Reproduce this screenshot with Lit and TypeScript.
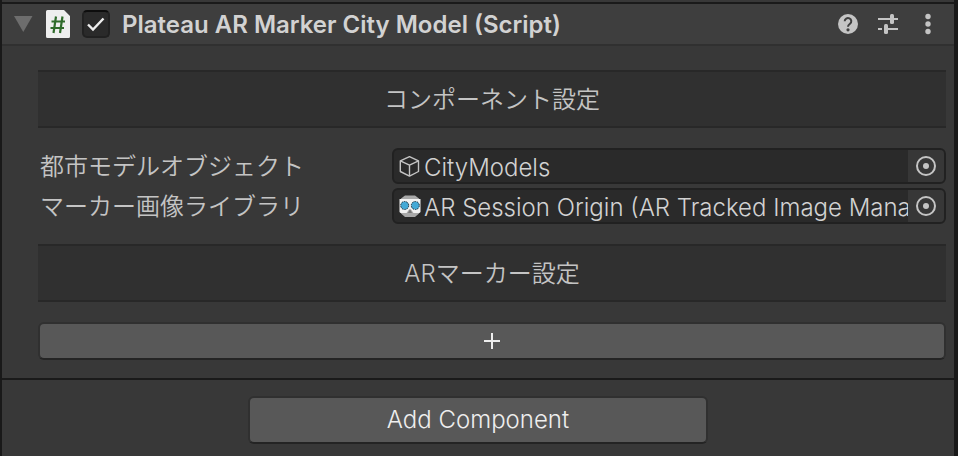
import { LitElement, html, svg, css } from "lit";
import { customElement, property, state } from "lit/decorators.js";

const cubeIcon = svg`
  <svg viewBox="0 0 22 22" width="22" height="22" fill="none" stroke="#c4c4c4" stroke-width="1.4" stroke-linejoin="round" aria-hidden="true">
    <path d="M10.500 1.700 19.500 5.800V16.500L10.500 21.100 1.300 16.500V5.800Z"/>
    <path d="M1.300 5.800 10.500 10.100 19.500 5.800M10.500 10.100V21.100"/>
  </svg>`;

const originIcon = svg`
  <svg viewBox="0 0 22 22" width="22" height="22" aria-hidden="true">
    <path d="M6 0.500h10l4 3v15l-4 3.500H6l-4-3.500v-15Z" fill="#a9a9a9"/>
    <path d="M0.500 4h21v13l-1 1h-6L12 14.500h-2L7.500 18h-6l-1-1Z" fill="#f2f2f2"/>
    <path d="M9 18 11 14l2 4Z" fill="#777"/>
    <circle cx="5.700" cy="10.500" r="4" fill="#43a9d6" stroke="#1d2b33" stroke-width="1" stroke-dasharray="1.500 1"/>
    <circle cx="16.300" cy="10.500" r="4" fill="#43a9d6" stroke="#1d2b33" stroke-width="1" stroke-dasharray="1.500 1"/>
  </svg>`;

@customElement("object-field")
export class ObjectField extends LitElement {
  @property() label = "";
  @property() value = "";
  @property() icon: "cube" | "origin" = "cube";

  static styles = css`
    :host {
      display: grid;
      grid-template-columns: 352px minmax(0, 1fr);
      align-items: center;
      height: 36px;
    }
    .label {
      padding: 2px 0 0 2px;
      color: #c4c4c4;
      white-space: nowrap;
    }
    .field {
      display: flex;
      align-items: center;
      box-sizing: border-box;
      height: 36px;
      margin-left: 2px;
      padding-left: 5px;
      border: 2px solid #212121;
      border-radius: 6px;
      background: #2a2a2a;
      overflow: hidden;
    }
    .field svg {
      flex: none;
    }
    .value {
      flex: 1;
      min-width: 0;
      height: 32px;
      margin: 0;
      padding: 3px 0 0 3px;
      box-sizing: border-box;
      border: 0;
      outline: 0;
      background: none;
      color: #d2d2d2;
      font: inherit;
    }
    .pick {
      display: grid;
      place-items: center;
      flex: none;
      width: 36px;
      height: 32px;
      padding: 0;
      border: 0;
      background: #373737;
    }
  `;

  render() {
    return html`
      <label class="label" for="value">${this.label}</label>
      <div class="field">
        ${this.icon === "cube" ? cubeIcon : originIcon}
        <input class="value" id="value" type="text" readonly .value=${this.value} />
        <button class="pick" type="button" aria-label="Select object">
          <svg viewBox="0 0 22 22" width="22" height="22" aria-hidden="true">
            <circle cx="11" cy="11" r="9" fill="none" stroke="#c4c4c4" stroke-width="2" />
            <circle cx="11" cy="11" r="3" fill="#c4c4c4" />
          </svg>
        </button>
      </div>
    `;
  }
}

@customElement("app-root")
export class AppRoot extends LitElement {
  @state() private active = true;

  static styles = css`
    :host {
      display: block;
      box-sizing: border-box;
      min-height: 100vh;
      border-left: 2px solid #191919;
      border-right: 4px solid #191919;
      background: #383838;
      color: #c4c4c4;
      font: 350 24px/32px Inter, "Noto Sans CJK JP", sans-serif;
    }
    .header {
      display: flex;
      align-items: center;
      box-sizing: border-box;
      height: 44px;
      margin-top: 2px;
      padding: 0 14px 0 12px;
      border-top: 2px solid #1a1a1a;
      border-bottom: 2px solid #303030;
      background: #3e3e3e;
    }
    .page {
      display: flow-root;
    }
    .icon-button {
      display: grid;
      place-items: center;
      flex: none;
      width: 24px;
      height: 24px;
      padding: 0;
      border: 0;
      background: none;
    }
    .fold {
      width: 20px;
    }
    .script {
      flex: none;
      margin: 0 12px;
    }
    .toggle {
      display: grid;
      flex: none;
      margin-right: 12px;
    }
    .toggle > * {
      grid-area: 1 / 1;
    }
    .check {
      appearance: none;
      box-sizing: border-box;
      width: 28px;
      height: 28px;
      margin: 0;
      border: 2px solid #212121;
      border-top-color: #0d0d0d;
      border-radius: 5px;
      background: #2a2a2a;
    }
    .tick {
      pointer-events: none;
    }
    .title {
      flex: 1;
      min-width: 0;
      margin: 0;
      padding-top: 2px;
      overflow: hidden;
      color: #d2d2d2;
      font-size: 24px;
      font-weight: 600;
      white-space: nowrap;
    }
    .tools {
      display: flex;
      gap: 16px;
    }
    .body {
      display: flex;
      flex-direction: column;
      gap: 20px;
      padding: 24px 8px 18px 36px;
      border-bottom: 2px solid #1a1a1a;
    }
    .band {
      box-sizing: border-box;
      margin: 0;
      padding: 12px 0 10px;
      border: solid #282828;
      border-width: 2px 0;
      background: #303030;
      font-size: 24px;
      font-weight: inherit;
      text-align: center;
    }
    .fields {
      display: grid;
      gap: 4px;
    }
    .button {
      display: grid;
      place-items: center;
      box-sizing: border-box;
      padding: 0;
      border: 2px solid #303030;
      border-bottom-color: #242424;
      border-radius: 6px;
      background: #585858;
      color: #eeeeee;
      font: inherit;
    }
    .add-marker {
      width: 100%;
      height: 38px;
    }
    .footer {
      display: flex;
      justify-content: center;
      padding: 16px 0 12px;
    }
    .add-component {
      width: 460px;
      height: 48px;
    }
  `;

  private onToggle(e: Event) {
    this.active = (e.target as HTMLInputElement).checked;
  }

  render() {
    return html`
      <div class="page">
        <header class="header">
          <button class="icon-button fold" type="button" aria-label="Collapse" aria-expanded="true">
            <svg viewBox="0 0 20 18" width="20" height="18" aria-hidden="true">
              <path d="M0 1h18.500L9.250 17Z" fill="#6d6d6d" />
            </svg>
          </button>
          <svg class="script" viewBox="0 0 24 28" width="24" height="28" aria-hidden="true">
            <path d="M1.500 0H18l6 6v20.500a1.500 1.500 0 0 1-1.500 1.500h-21A1.500 1.500 0 0 1 0 26.500v-25A1.500 1.500 0 0 1 1.500 0Z" fill="#eeeeee" />
            <path d="M10 6.500 7.500 23M16.500 6.500 14 23M5.500 11.500H19M4.500 18H18" fill="none" stroke="#2f6b2b" stroke-width="2.200" />
          </svg>
          <div class="toggle">
            <input class="check" type="checkbox" aria-label="Enabled" .checked=${this.active} @change=${this.onToggle} />
            ${this.active
              ? html`<svg class="tick" viewBox="0 0 28 28" width="28" height="28" aria-hidden="true">
                  <path d="M6 14.500 11 19.500 21.500 8.500" fill="none" stroke="#eeeeee" stroke-width="2.400" />
                </svg>`
              : null}
          </div>
          <h1 class="title">Plateau AR Marker City Model (Script)</h1>
          <div class="tools">
            <button class="icon-button" type="button" aria-label="Help">
              <svg viewBox="0 0 24 24" width="24" height="24" aria-hidden="true">
                <circle cx="12" cy="12" r="10" fill="#c4c4c4" />
                <path d="M8.700 9.300a3.300 3.200 0 1 1 5.300 2.500c-1.300 1-2 1.400-2 3" fill="none" stroke="#3e3e3e" stroke-width="2" />
                <circle cx="12" cy="17.800" r="1.600" fill="#3e3e3e" />
              </svg>
            </button>
            <button class="icon-button" type="button" aria-label="Presets">
              <svg viewBox="0 0 24 24" width="24" height="24" aria-hidden="true">
                <path d="M2 7H14M18 7H22M2 17H6M10 17H22" stroke="#c4c4c4" stroke-width="2" />
                <rect x="14" y="2" width="4" height="10" rx="1.500" fill="#c4c4c4" />
                <rect x="8" y="12" width="4" height="10" rx="1.500" fill="#c4c4c4" />
              </svg>
            </button>
            <button class="icon-button" type="button" aria-label="More">
              <svg viewBox="0 0 24 24" width="24" height="24" aria-hidden="true">
                <g fill="#c4c4c4">
                  <circle cx="12" cy="4.500" r="2.700" />
                  <circle cx="12" cy="12" r="2.700" />
                  <circle cx="12" cy="19.500" r="2.700" />
                </g>
              </svg>
            </button>
          </div>
        </header>
        <main class="body">
          <h2 class="band">コンポーネント設定</h2>
          <div class="fields">
            <object-field label="都市モデルオブジェクト" value="CityModels" icon="cube"></object-field>
            <object-field
              label="マーカー画像ライブラリ"
              value="AR Session Origin (AR Tracked Image Manager)"
              icon="origin"
            ></object-field>
          </div>
          <h2 class="band">ARマーカー設定</h2>
          <button class="button add-marker" type="button" aria-label="Add marker">
            <svg viewBox="0 0 18 18" width="18" height="18" aria-hidden="true">
              <path d="M1 9H17M9 1V17" stroke="#eeeeee" stroke-width="2" />
            </svg>
          </button>
        </main>
        <footer class="footer">
          <button class="button add-component" type="button">Add Component</button>
        </footer>
      </div>
    `;
  }
}
